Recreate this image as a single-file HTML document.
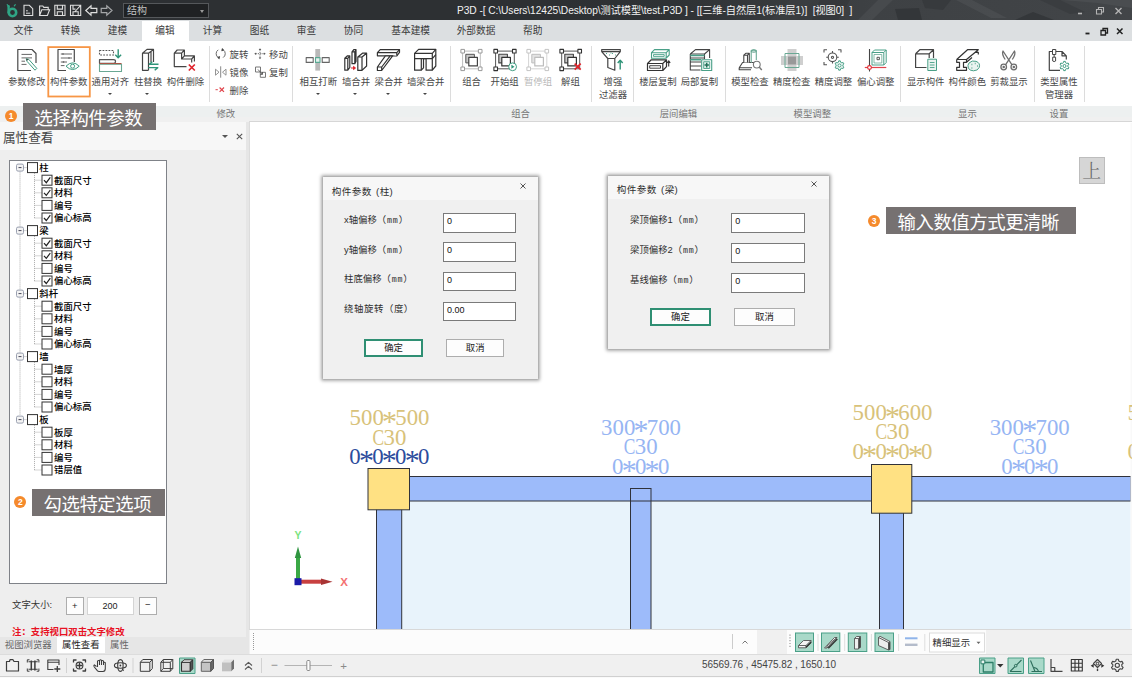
<!DOCTYPE html><html lang="zh-CN"><head><meta charset="utf-8"><title>P3D</title><style>
*{box-sizing:border-box;margin:0;padding:0}
html,body{width:1132px;height:678px;overflow:hidden;background:#f0f0f0}
body{font-family:"Liberation Sans","Noto Sans CJK SC",sans-serif;color:#444;position:relative}
#app{position:absolute;left:0;top:0;width:1132px;height:678px;overflow:hidden;background:#f0f0f0}
.abs{position:absolute}
.t{position:absolute;white-space:nowrap;line-height:1}
.c{transform:translate(-50%,-50%)}
.l{transform:translate(0,-50%)}
.rl{font-size:9.4px;color:#484848}
.gl{font-size:9.4px;color:#777}
.tab{font-size:9.7px;color:#3a3a3a}
.sep{position:absolute;width:1px;background:#dcdcdc;top:46px;height:56px}
.tree{font-size:9.4px;color:#000;font-weight:500}
.cb{position:absolute;width:10px;height:10px;border:1px solid #333;background:#fff}
.dlg{position:absolute;background:#f0f0f0;box-shadow:0 0 3.5px .5px rgba(0,0,0,.33);border:1px solid #b2b2b2;border-radius:1.5px}
.dlg .hd{position:absolute;left:0;top:0;right:0;height:23px;background:#f7f7f7}
.dl{font-size:9.4px;color:#2e2e2e}
.inp{position:absolute;background:#fff;border:1px solid #7a7a7a;font-size:9px;color:#111;padding:3px 0 0 3px;line-height:1}
.btn{position:absolute;background:#fdfdfd;border:1px solid #adadad;font-size:9.4px;color:#222;text-align:center}
.btn.ok{border:2px solid #2f8f73}
.call{position:absolute;background:#767171;color:#fff;font-size:18.4px;letter-spacing:-.45px;line-height:1;white-space:nowrap}
.dot{position:absolute;width:12.4px;height:12.4px;border-radius:50%;background:#f58a2c;color:#fff;font-size:8.5px;font-weight:bold;text-align:center;line-height:12.4px}
</style></head><body><div id="app"><div class="abs" style="left:0;top:0;width:1132px;height:20px;background:#2d3033"></div><svg class="abs" style="left:560px;top:0" width="572" height="20" viewBox="560 0 572 20">
<defs><linearGradient id="tg" x1="0" x2="1"><stop offset="0" stop-color="#2d3033"/><stop offset=".2" stop-color="#2f3235"/><stop offset=".55" stop-color="#3e4144"/><stop offset="1" stop-color="#424548"/></linearGradient></defs>
<rect x="560" width="572" height="20" fill="url(#tg)"/>
<g opacity=".75">
<polygon points="858,20 878,0 893,0 872,20" fill="#4a4d50"/>
<polygon points="895,9 919,8 922,20 898,20" fill="#303336"/>
<polygon points="922,0 951,0 943,10 925,8" fill="#35383b"/>
<polygon points="956,0 972,0 1007,18 991,18" fill="#4c4f52"/>
<polygon points="1015,20 1033,12 1054,20" fill="#303336"/>
<polygon points="1062,0 1132,0 1132,8 1097,3" fill="#4d5053"/>
<polygon points="790,0 815,0 796,20 770,20" fill="#3b3e41"/>
<polygon points="820,0 850,0 838,20 812,20" fill="#34373a"/>
<polygon points="1040,0 1060,0 1085,12 1070,14" fill="#383b3e"/>
</g>
</svg><svg class="abs" style="left:5px;top:2px" width="16" height="17" viewBox="0 0 16 17"><circle cx="7.5" cy="10.5" r="3.7" fill="none" stroke="#2fa585" stroke-width="2.6"/><path d="M3.6 10.5V4.2" stroke="#2fa585" stroke-width="2.4" stroke-linecap="round"/><path d="M2.2 2.6l1 1.2M10.3 2.6l-1 1.2" stroke="#2fa585" stroke-width="1.2" stroke-linecap="round"/></svg><svg class="abs" style="left:22px;top:3px" width="100" height="15" viewBox="22 3 100 15" fill="none" stroke="#dedede" stroke-width="1.100">
<path d="M24 5.300h5.300l3.400 3.400v6.800h-8.700z"/><path d="M26 10.800h1.800M26 13.200h4.300" stroke-width="1"/>
<path d="M39.600 15.500l2.200-5.800h7.800l-2.200 5.800zM39.600 15.500V6h3.200l1 1.400h4.400v2.300"/>
<path d="M54.800 5.300h10.200v10.200h-10.200zM57.300 5.300v3.800h5.200v-3.800M57.300 15.500v-3.800h5.200v3.800"/>
<path d="M70.500 5.300h10.200v10.200h-10.200zM73 5.300v3.800h2.500M73 15.500v-3.800h5.200v3.800M75 11.500l5.700-6.200"/>
<path d="M85.800 10.500L91 5.800V8.300H96.800V12.700H91V15.200Z" stroke-width="1.200"/>
<path d="M112 10.500L106.800 5.800V8.300H101.200V12.700H106.800V15.200Z" stroke="#a4a6a8" stroke-width="1.200"/>
</svg><div class="abs" style="left:123px;top:3px;width:86px;height:15px;background:#1f2123;border:1px solid #55585b"></div><div class="t l " style="left:127px;top:10.5px;font-size:10px;color:#c4c4c4">结构</div><div class="abs" style="left:200px;top:10px;border:2.5px solid transparent;border-top:3px solid #999;border-bottom:0"></div><div class="t l " style="left:457px;top:10.5px;font-size:10.2px;color:#f2f2f2;letter-spacing:-0.066px;">P3D -[ C:\Users\12425\Desktop\测试模型\test.P3D ] - [[三维-自然层1(标准层1)]&nbsp; [视图0]&nbsp; ]</div><svg class="abs" style="left:1070px;top:2px" width="62" height="17" viewBox="1070 2 62 17" fill="none" stroke="#b4b4b4" stroke-width="1.1">
<path d="M1078 13.500h4" stroke-width="1.6"/><path d="M1096.500 9.500h5v4.500h-5zM1098.500 9.500v-2h5v4.500h-2"/><path d="M1115.500 8l6 6M1121.500 8l-6 6" stroke-width="1.4"/></svg><div class="abs" style="left:0;top:20px;width:1132px;height:21px;background:#dcdfe1"></div><div class="abs" style="left:142px;top:21px;width:47px;height:20px;background:#fff"></div><div class="t c tab" style="left:23.5px;top:31px;">文件</div><div class="t c tab" style="left:70.5px;top:31px;">转换</div><div class="t c tab" style="left:117.5px;top:31px;">建模</div><div class="t c tab" style="left:164.9px;top:31px;">编辑</div><div class="t c tab" style="left:212.5px;top:31px;">计算</div><div class="t c tab" style="left:259.5px;top:31px;">图纸</div><div class="t c tab" style="left:306.5px;top:31px;">审查</div><div class="t c tab" style="left:353.5px;top:31px;">协同</div><div class="t c tab" style="left:410.7px;top:31px;">基本建模</div><div class="t c tab" style="left:476px;top:31px;">外部数据</div><div class="t c tab" style="left:532.7px;top:31px;">帮助</div><svg class="abs" style="left:1080px;top:23px" width="52" height="17" viewBox="1080 23 52 17" fill="none" stroke="#222" stroke-width="1.3">
<path d="M1085.500 33.500h4" stroke-width="1.8"/><path d="M1101 30.500h4.500v4.500h-4.500zM1103 30.500v-2h4.500v4.500h-2"/><path d="M1117 28.500l5.500 5.500M1122.500 28.500l-5.500 5.500" stroke-width="1.5"/></svg><div class="abs" style="left:0;top:41px;width:1132px;height:65px;background:#fff"></div><div class="abs" style="left:0;top:106px;width:1132px;height:16px;background:linear-gradient(#edf0f0 0,#edf0f0 11px,#f0f0f0 11px,#f0f0f0 16px)"></div><div class="sep" style="left:208.7px"></div><div class="sep" style="left:292px"></div><div class="sep" style="left:450px"></div><div class="sep" style="left:591px"></div><div class="sep" style="left:632.5px"></div><div class="sep" style="left:724.5px"></div><div class="sep" style="left:900px"></div><div class="sep" style="left:1034px"></div><div class="sep" style="left:1083.5px"></div><div class="t c rl" style="left:26.7px;top:81.8px;">参数修改</div><div class="t c rl" style="left:68.7px;top:81.8px;">构件参数</div><div class="t c rl" style="left:110.3px;top:81.8px;">通用对齐</div><div class="t c rl" style="left:148px;top:81.8px;">柱替换</div><div class="t c rl" style="left:185.5px;top:81.8px;">构件删除</div><div class="t c rl" style="left:318.3px;top:81.8px;">相互打断</div><div class="t c rl" style="left:356px;top:81.8px;">墙合并</div><div class="t c rl" style="left:388.7px;top:81.8px;">梁合并</div><div class="t c rl" style="left:425.7px;top:81.8px;">墙梁合并</div><div class="t c rl" style="left:471.6px;top:81.8px;">组合</div><div class="t c rl" style="left:504.7px;top:81.8px;">开始组</div><div class="t c rl" style="left:570.5px;top:81.8px;">解组</div><div class="t c rl" style="left:613px;top:81.8px;">增强</div><div class="t c rl" style="left:658px;top:81.8px;">楼层复制</div><div class="t c rl" style="left:699.5px;top:81.8px;">局部复制</div><div class="t c rl" style="left:750px;top:81.8px;">模型检查</div><div class="t c rl" style="left:791.7px;top:81.8px;">精度检查</div><div class="t c rl" style="left:833.5px;top:81.8px;">精度调整</div><div class="t c rl" style="left:875.7px;top:81.8px;">偏心调整</div><div class="t c rl" style="left:925.7px;top:81.8px;">显示构件</div><div class="t c rl" style="left:967.3px;top:81.8px;">构件颜色</div><div class="t c rl" style="left:1009px;top:81.8px;">剪裁显示</div><div class="t c rl" style="left:1059px;top:81.8px;">类型属性</div><div class="t c rl" style="left:538px;top:81.8px;color:#b8b8b8">暂停组</div><div class="t c rl" style="left:613px;top:95.4px;">过滤器</div><div class="t c rl" style="left:1059px;top:95.4px;">管理器</div><div class="abs" style="left:107.7px;top:92.5px;border:2px solid transparent;border-top:2.5px solid #444;border-bottom:0"></div><div class="abs" style="left:145.2px;top:92.5px;border:2px solid transparent;border-top:2.5px solid #444;border-bottom:0"></div><div class="abs" style="left:316px;top:92.5px;border:2px solid transparent;border-top:2.5px solid #444;border-bottom:0"></div><div class="abs" style="left:353.3px;top:92.5px;border:2px solid transparent;border-top:2.5px solid #444;border-bottom:0"></div><div class="abs" style="left:386.2px;top:92.5px;border:2px solid transparent;border-top:2.5px solid #444;border-bottom:0"></div><div class="abs" style="left:423.2px;top:92.5px;border:2px solid transparent;border-top:2.5px solid #444;border-bottom:0"></div><div class="t l rl" style="left:229.5px;top:55px;">旋转</div><div class="t l rl" style="left:269px;top:55px;">移动</div><div class="t l rl" style="left:229.5px;top:73px;">镜像</div><div class="t l rl" style="left:269px;top:73px;">复制</div><div class="t l rl" style="left:229.5px;top:91px;">删除</div><div class="t c gl" style="left:225.8px;top:114px;">修改</div><div class="t c gl" style="left:520.6px;top:114px;">组合</div><div class="t c gl" style="left:678.4px;top:114px;">层间编辑</div><div class="t c gl" style="left:812.3px;top:114px;">模型调整</div><div class="t c gl" style="left:967.5px;top:114px;">显示</div><div class="t c gl" style="left:1059px;top:114px;">设置</div><svg class="abs" style="left:45px;top:44px" width="50" height="56" viewBox="45 44 50 56"><rect x="48.300" y="47.100" width="41.500" height="49.400" fill="none" stroke="#f79646" stroke-width="1.800"/></svg><svg class="abs" style="left:0;top:41px" width="1132" height="64" viewBox="0 41 1132 64" fill="none" stroke="#4a4a4a" stroke-width="1.200" stroke-linejoin="round">
<!-- 1 参数修改 -->
<path d="M31 70.500H17.800V49.500H32L36 53.500V63"/>
<path d="M21.500 54.400H32M21.500 57.900H32M21.500 61.200H25M21.500 64.400H26.500" stroke-width="1" stroke="#666"/>
<path d="M26.200 58.700L28.800 59.400 36.800 68.400 35 70.200 27 61.300Z" fill="#fff" stroke="#3f9d82" stroke-width="1"/>
<path d="M26.200 58.700l.6 2.200 1.700-1.600z" fill="#444" stroke="none"/>
<!-- 2 构件参数 -->
<path d="M66 70.500H58V49.500H74.300V62"/>
<path d="M60.800 54H72M60.800 58H72M60.800 62H67M60.800 65.600H64.500" stroke="#666" stroke-width="1"/>
<path d="M63 53.200v1.600M69 57.200v1.600M63.500 61.200v1.600" stroke="#666" stroke-width="1.400"/>
<path d="M66 66.200Q72.600 59.500 79.200 66.200Q72.600 72.900 66 66.200Z" fill="#fff" stroke="#3f9d82" stroke-width="1"/>
<circle cx="72.600" cy="66.200" r="2" stroke="#3f9d82" stroke-width="1"/>
<!-- 3 通用对齐 -->
<path d="M99.500 50.500H113.500V55H99.500Z" stroke="#555" stroke-width="1.100" stroke-dasharray="1.800 1.200"/>
<path d="M118.200 49.200V57.500M115.300 54.700l2.900 3 2.900-3" stroke="#2f9478" stroke-width="1.400"/>
<path d="M99.500 59.700H113.500Q115.500 59.700 115.500 61.500T113.500 63.300H99.500Z" stroke="#555"/>
<path d="M99.500 63.600H121.500" stroke="#c0392b" stroke-width="1.200"/>
<path d="M99.500 64.300H121.500V71.500H99.500Z" stroke="#6aa894" stroke-width="1.100"/>
<!-- 4 柱替换 -->
<path d="M148.500 70.300H142.500V53.200L147 49.400H153.500V62M142.500 53.200H148.500V70.300M148.500 53.200L153.500 49.400M151 51.500V62" stroke="#444"/>
<path d="M158.500 64.300H149.200L152.300 61.800M148.200 67.600H157.800L154.700 70.200" stroke="#2f9478" stroke-width="1.400"/>
<!-- 5 构件删除 -->
<path d="M186.500 66.600H174.300V53.200L177.200 50H184.400V55.800H194.400V61.500M174.300 53.200H181.600V59H191.700V62.500M181.600 53.200L184.400 50M191.700 59L194.400 55.800M181.600 59L184.400 55.800" stroke="#444"/>
<path d="M188.800 64.500l6 6M194.800 64.500l-6 6" stroke="#e0242c" stroke-width="1.700"/>
<!-- small: 旋转 移动 镜像 复制 删除 -->
<g stroke="#6a6a6a" stroke-width="1">
<path d="M218.300 49.800A4.600 4.600 0 0 0 218.300 57.600M223.100 57.600A4.600 4.600 0 0 0 223.100 49.800"/>
<path d="M222.200 48.600l1.500 1.400-1.900 .9zM219.200 58.800l-1.500-1.400 1.900-.9z" fill="#444" stroke="#444" stroke-width=".8"/>
<path d="M260 49.500V58M255.500 53.700H264.500" stroke-dasharray="1.300 1"/>
<path d="M260 48.200l1.300 1.800h-2.600zM260 59.200l1.300-1.800h-2.600zM254.300 53.700l1.800-1.300v2.600zM265.700 53.700l-1.800-1.300v2.600z" fill="#555" stroke="none"/>
<path d="M220.700 66.300V77.700" stroke="#888"/>
<path d="M215.500 69.200V75.200L219 72.200ZM226 69.200V75.200L222.500 72.200Z" stroke="#888" stroke-width=".9"/>
<path d="M255.500 67H260.500V72H255.500ZM260.300 72.300H265.500V77.300H260.300Z" stroke="#777"/>
<path d="M258 69.500L262.300 74.200M262.500 72v2.400h-2.300" stroke="#555" stroke-width=".9"/>
<path d="M219.600 87.500l4.400 4.400M224 87.500l-4.400 4.400" stroke="#e0444c" stroke-width="1.200"/>
<path d="M215.500 89.700h2.300" stroke="#e0444c" stroke-width="1"/>
</g>
<!-- 相互打断 -->
<rect x="315.300" y="49" width="4.800" height="21.600" fill="#b9b9b9" stroke="none"/>
<rect x="306.200" y="57.600" width="7" height="4.800" stroke="#666" stroke-width="1.100" fill="#fff"/>
<rect x="322.200" y="57.600" width="7" height="4.800" stroke="#666" stroke-width="1.100" fill="#fff"/>
<rect x="315.500" y="57.600" width="4.500" height="4.800" stroke="#5aa892" stroke-width="1.100" fill="#e6f2ee"/>
<!-- 墙合并 -->
<g stroke="#333" stroke-width="1.200" fill="#fff">
<path d="M344.800 58.300L347.500 55.800H349.800V67.500L347.800 70.200H344.800ZM344.800 58.300H347.800V70.200M347.800 58.300L349.800 55.800"/>
<path d="M352 51.800L354 49.500H356V61.500L354.800 63.700H352ZM352 51.800H354.800V63.700M354.800 51.800L356 49.500"/>
<path d="M357.800 57L362.500 53.200H366.600V66L362 70.400H357.800ZM357.800 57H362V70.400M362 57L366.600 53.200"/>
<path d="M351 68H355M353.500 66.400l2 1.600-2 1.600z" stroke="#e0242c" fill="#e0242c" stroke-width="1"/>
</g>
<!-- 梁合并 -->
<g stroke="#333" stroke-width="1.200" fill="#fff">
<path d="M377.400 52.700L380.200 49.600H399.500V52.300L396.800 55.800H377.400Z"/>
<path d="M377.400 52.700H396.800V55.800M396.800 52.700L399.500 49.600"/>
<path d="M385.400 55.800L377.400 67V70.500H381.700L392.600 55.800ZM377.400 67H381.700V70.500M381.700 67L390.200 55.800"/>
</g>
<!-- 墙梁合并 -->
<g stroke="#333" stroke-width="1.200" fill="#fff">
<path d="M414.600 53.300L418.600 49.300H435.800V66L432.300 70.200H426.100V58.600H423.500V67.800L421.300 70.200H414.600Z"/>
<path d="M414.600 53.300H432.300V70.200M432.300 53.300L435.800 49.300M414.600 58.600H432.300M432.300 58.600L435.800 54.600M421.300 58.600V70.200" fill="none"/>
</g>
<!-- 组合 -->
<g id="grp1" stroke="#9a9a9a" stroke-width="1">
<path d="M462.600 51.100H480.300V68.800H462.600Z" stroke="#bdbdbd"/>
<rect x="465.800" y="54.300" width="8.600" height="8.600" fill="#c9c9c9" stroke="#555"/>
<rect x="468.800" y="57.300" width="8.600" height="8.600" fill="#fff" stroke="#444" stroke-width="1.200"/>
<rect x="460.900" y="49.400" width="3.600" height="3.600" fill="#fff"/><rect x="478.400" y="49.400" width="3.600" height="3.600" fill="#fff"/><rect x="460.900" y="67" width="3.600" height="3.600" fill="#fff"/><rect x="478.400" y="67" width="3.600" height="3.600" fill="#fff"/>
</g>
<!-- 开始组 -->
<g stroke="#333" stroke-width="1.100">
<path d="M495.600 51.100H514.300V68.800H495.600Z" stroke="#555" stroke-width="1"/>
<rect x="498.800" y="54.300" width="8.600" height="8.600" fill="#c9c9c9" stroke="#444"/>
<rect x="501.800" y="57.300" width="8.600" height="8.600" fill="#fff" stroke="#333" stroke-width="1.200"/>
<rect x="493.900" y="49.400" width="3.600" height="3.600" fill="#fff"/><rect x="512.500" y="49.400" width="3.600" height="3.600" fill="#fff"/><rect x="493.900" y="67" width="3.600" height="3.600" fill="#fff"/>
<circle cx="512.600" cy="66.800" r="3.900" fill="#fff" stroke="#3f9d82" stroke-width="1"/>
<path d="M511.400 64.800v4l3.100-2z" fill="#2f9478" stroke="none"/>
</g>
<!-- 暂停组 -->
<g stroke="#c4c4c4" stroke-width="1">
<path d="M528.600 51.100H546.800V68.800H528.600Z" stroke="#d4d4d4"/>
<rect x="531.800" y="54.300" width="8.600" height="8.600" fill="#e3e3e3" stroke="#bdbdbd"/>
<rect x="534.800" y="57.300" width="8.600" height="8.600" fill="#fff" stroke="#bdbdbd" stroke-width="1.200"/>
<rect x="526.900" y="49.400" width="3.600" height="3.600" fill="#fff"/><rect x="545" y="49.400" width="3.600" height="3.600" fill="#fff"/><rect x="526.900" y="67" width="3.600" height="3.600" fill="#fff"/><rect x="545" y="67" width="3.600" height="3.600" fill="#fff"/>
</g>
<!-- 解组 -->
<g stroke="#333" stroke-width="1.100">
<path d="M561.700 51.100H579.700V68.800H561.700Z" stroke="#555" stroke-width="1"/>
<rect x="564.800" y="54.300" width="8.600" height="8.600" fill="#c9c9c9" stroke="#444"/>
<rect x="567.800" y="57.300" width="8.600" height="8.600" fill="#fff" stroke="#333" stroke-width="1.200"/>
<rect x="559.900" y="49.400" width="3.600" height="3.600" fill="#fff"/><rect x="577.900" y="49.400" width="3.600" height="3.600" fill="#fff"/><rect x="559.900" y="67" width="3.600" height="3.600" fill="#fff"/>
<path d="M574.700 63.700l6 6M580.700 63.700l-6 6" stroke="#e0242c" stroke-width="1.700"/>
</g>
<!-- 增强过滤器 -->
<path d="M601.700 49.600H620.300V51.600L614.800 58.500V70.200L607.800 67.500V58.500L601.700 51.600ZM601.700 51.600H620.300M607.800 58.500H614.800" stroke="#444"/>
<path d="M606 53.500h.9M609 55h.9M612 53.500h.9M615 55h.9M610.500 53h.9" stroke="#3f9d82" stroke-width="1"/>
<path d="M620.200 69.500V60.500M617.700 63l2.500-2.800 2.500 2.800" stroke="#2f9478" stroke-width="1.400"/>
<!-- 楼层复制 -->
<g stroke="#4aa088" stroke-width="1.100">
<path d="M651.500 52.700L654.500 49.600H669.200V55L666.200 58.200H651.500ZM651.500 52.700H666.200V58.200M666.200 52.700L669.200 49.600"/>
<path d="M653.500 54.600H664.200V56.400H653.500Z" stroke-width=".9"/>
</g>
<g stroke="#333" stroke-width="1.200">
<path d="M647.500 63.500L651.300 59.800H666.500V66.700L662.800 70.500H647.500ZM647.500 63.500H662.800V70.500M662.800 63.500L666.500 59.800"/>
<path d="M649.700 65.700H660.500V68.200H649.700Z" stroke-width=".9"/>
<path d="M668.700 66.500V61M667.200 62.800l1.500-2 1.500 2" stroke-width="1.100"/>
</g>
<!-- 局部复制 -->
<g stroke="#444" stroke-width="1.100">
<path d="M690.300 54L695.500 49.600H709.600V58M690.300 54H704.500L709.600 49.600M704.500 54V59"/>
<path d="M690.300 54V70H700.500M690.300 58H704.500M690.300 62H701M690.300 66H701"/>
<path d="M690.300 55.500H704.500M690.300 59.700H701" stroke="#4aa088" stroke-width="1.600"/>
<rect x="701.700" y="59.700" width="10" height="10.800" fill="#fff" stroke="#4aa088"/>
<rect x="703.700" y="61.700" width="6" height="6.800" fill="#e1f0eb" stroke="#4aa088" stroke-width=".9"/>
<path d="M706.700 62.800v4.600M704.500 65.100h4.400" stroke="#23705a" stroke-width="1.500"/>
</g>
<!-- 模型检查 -->
<g stroke="#444" stroke-width="1.100">
<path d="M739.200 67.700L742.600 62.500H758.500M739.200 67.700H752M739.200 67.700V69.800H751"/>
<path d="M743.800 62.500V55.200L745.800 53.300H749.300V62.500M743.800 55.200H747.500V62.500M747.500 55.200L749.300 53.300" fill="#fff"/>
<path d="M751.200 62.500V51Q753.700 49 756.300 51V60" stroke="#6aa894" fill="#fff"/>
<ellipse cx="753.750" cy="51" rx="2.550" ry="1.100" stroke="#6aa894"/>
<circle cx="756.800" cy="64.600" r="3.400" fill="#fff" stroke="#777"/>
<path d="M759.200 67l2.600 3" stroke="#777" stroke-width="1.400"/>
</g>
<!-- 精度检查 -->
<rect x="787.500" y="49" width="9" height="22" fill="#cfcfcf" stroke="none"/>
<rect x="781" y="56" width="22" height="9" fill="#cfcfcf" stroke="none"/>
<rect x="788" y="56.500" width="8" height="8" fill="#999" stroke="none"/>
<rect x="785" y="53.500" width="14" height="14" stroke="#6aa894" stroke-width="1"/>
<!-- 精度调整 -->
<g stroke="#555" stroke-width="1.100">
<circle cx="832.500" cy="57.300" r="4.300"/><circle cx="832.500" cy="57.300" r="1.100"/>
<path d="M832.500 51v2M832.500 61.600v2M826.200 57.300h2M836.800 57.300h2"/>
<path d="M824 52.500V49.700H827M838 49.700H841V52.500M824 62V64.800H827"/>
<g stroke="#3f9d82" stroke-width="1">
<path d="M838.55 62.13L838.68 60.87L840.32 60.87L840.45 62.13L841.94 62.99L843.10 62.47L843.92 63.90L842.89 64.64L842.89 66.36L843.92 67.10L843.10 68.53L841.94 68.01L840.45 68.87L840.32 70.13L838.68 70.13L838.55 68.87L837.06 68.01L835.90 68.53L835.08 67.10L836.11 66.36L836.11 64.64L835.08 63.90L835.90 62.47L837.06 62.99Z" fill="#fff"/><circle cx="839.500" cy="65.500" r="1.600"/>
</g>
</g>
<!-- 偏心调整 -->
<g stroke-width="1.100">
<path d="M869.500 49V71.500" stroke="#444"/>
<path d="M872 52.500L874.500 50H886.200V62.500L883.800 65H872ZM872 52.500H883.800V65M883.800 52.500L886.200 50" stroke="#4aa088" stroke-width="1"/>
<path d="M874 54.500H881.800V63H874Z" stroke="#6aa894" stroke-width=".8"/>
<rect x="877" y="57.300" width="2.400" height="2.400" stroke="#444" stroke-width=".9"/>
<path d="M864.800 67.500H886.300" stroke="#e0444c" stroke-width="1.200"/>
<circle cx="869.500" cy="67.500" r="1.900" fill="#fff" stroke="#e0242c" stroke-width="1.100"/>
</g>
<!-- 显示构件 -->
<g stroke="#444" stroke-width="1.200">
<path d="M915.600 53.800L919.800 49.700H933.500V58M915.600 53.800H929.200V58M929.200 53.800L933.500 49.700M915.600 53.800V67.500H926.500"/>
<path d="M931.500 52l2-2.300 2 2.300" stroke-width="1" stroke="#555" fill="none" opacity="0"/>
<rect x="927.800" y="59.200" width="8.700" height="11.300" fill="#eaf4f0" stroke="#4aa088" stroke-width="1"/>
<path d="M929.800 62.500H934.500M929.800 65H934.500M929.800 67.500H934.500" stroke="#4aa088" stroke-width=".9"/>
</g>
<!-- 构件颜色 -->
<g stroke="#333" stroke-width="1.200">
<path d="M956.700 59.500L967.500 49.700H978.300L976 52.300H978.300V54.500M956.700 59.500H966.500L978.300 49.700M956.700 59.500V62.300H959.500V67.300H956.700V70.300H966.500V67.300H963.500V62.300H966.500V59.500M966.500 62.300L972 57.500"/>
<path d="M969 63Q972 60 976 61.300Q980.500 63 979.300 67.300Q978 70.800 973.500 70.800Q969.500 70.800 968.300 68Q967.300 65 969 63Z" fill="#eaf4f0" stroke="#4aa088" stroke-width="1"/>
<path d="M971.500 64.500h.8M974.800 63.500h.8M977 66h.8M971.500 68h.8" stroke="#4aa088" stroke-width="1.300"/>
</g>
<!-- 剪裁显示 -->
<g stroke="#6e6e6e" stroke-width="1.300">
<circle cx="1003.700" cy="67" r="2.800"/><circle cx="1013.800" cy="67" r="2.800"/>
<path d="M1005.500 64.800L1014.500 51Q1016 54 1012.300 59.500M1012 64.800L1003 51Q1001.500 54 1005.200 59.500"/>
<circle cx="1003.700" cy="67" r=".6"/><circle cx="1013.800" cy="67" r=".6"/>
</g>
<!-- 类型属性管理器 -->
<g stroke="#444" stroke-width="1.200">
<path d="M1060 70.300H1049.300V51.500H1052M1056 51.500H1062L1066.300 55.800V59.500M1062 51.500V55.800H1066.300"/>
<path d="M1052.500 49.500H1055.800V54.500H1052.500ZM1054.150 54.500V57M1052.700 57.200H1055.600V61Q1054.150 62.200 1052.700 61Z" stroke-width="1"/>
<g stroke="#3f9d82" stroke-width="1">
<circle cx="1064.500" cy="66" r="1.500"/>
<path d="M1063.55 62.63L1063.68 61.37L1065.32 61.37L1065.45 62.63L1066.94 63.49L1068.10 62.97L1068.92 64.40L1067.89 65.14L1067.89 66.86L1068.92 67.60L1068.10 69.03L1066.94 68.51L1065.45 69.37L1065.32 70.63L1063.68 70.63L1063.55 69.37L1062.06 68.51L1060.90 69.03L1060.08 67.60L1061.11 66.86L1061.11 65.14L1060.08 64.40L1060.90 62.97L1062.06 63.49Z" fill="#fff"/>
<circle cx="1064.500" cy="66" r="1.500"/>
</g>
</g>
</svg>
<div class="abs" style="left:0;top:122px;width:247px;height:28px;background:#f7f7f7"></div><div class="abs" style="left:0;top:150px;width:247px;height:504px;background:#eeeeee"></div><div class="abs" style="left:246px;top:122px;width:3px;height:532px;background:#e6e6e6"></div><div class="t l " style="left:3px;top:137.8px;font-size:12.6px;color:#444">属性查看</div><div class="abs" style="left:221.500px;top:135px;border:3px solid transparent;border-top:3.5px solid #555;border-bottom:0"></div><svg class="abs" style="left:236px;top:133px" width="7" height="7" viewBox="0 0 7 7"><path d="M.8.800l5.400 5.400M6.200.800L.8 6.200" stroke="#555" stroke-width="1.100"/></svg><div class="abs" style="left:8.500px;top:160px;width:158px;height:424px;background:#fff;border:1px solid #7f8288"></div><div class="t l tree" style="left:39.3px;top:167.9px;">柱</div><div class="t l tree" style="left:54px;top:180.5px;">截面尺寸</div><div class="t l tree" style="left:54px;top:193.1px;">材料</div><div class="t l tree" style="left:54px;top:205.7px;">编号</div><div class="t l tree" style="left:54px;top:218.3px;">偏心标高</div><div class="t l tree" style="left:39.3px;top:230.9px;">梁</div><div class="t l tree" style="left:54px;top:243.5px;">截面尺寸</div><div class="t l tree" style="left:54px;top:256.1px;">材料</div><div class="t l tree" style="left:54px;top:268.7px;">编号</div><div class="t l tree" style="left:54px;top:281.3px;">偏心标高</div><div class="t l tree" style="left:39.3px;top:293.90000000000003px;">斜杆</div><div class="t l tree" style="left:54px;top:306.5px;">截面尺寸</div><div class="t l tree" style="left:54px;top:319.09999999999997px;">材料</div><div class="t l tree" style="left:54px;top:331.7px;">编号</div><div class="t l tree" style="left:54px;top:344.3px;">偏心标高</div><div class="t l tree" style="left:39.3px;top:356.90000000000003px;">墙</div><div class="t l tree" style="left:54px;top:369.5px;">墙厚</div><div class="t l tree" style="left:54px;top:382.09999999999997px;">材料</div><div class="t l tree" style="left:54px;top:394.7px;">编号</div><div class="t l tree" style="left:54px;top:407.3px;">偏心标高</div><div class="t l tree" style="left:39.3px;top:419.90000000000003px;">板</div><div class="t l tree" style="left:54px;top:432.49999999999994px;">板厚</div><div class="t l tree" style="left:54px;top:445.09999999999997px;">材料</div><div class="t l tree" style="left:54px;top:457.7px;">编号</div><div class="t l tree" style="left:54px;top:470.3px;">错层值</div><svg class="abs" style="left:0;top:150px" width="170" height="340" viewBox="0 150 170 340" fill="none"><path d="M20 171.6V415.6" stroke="#aaa" stroke-width="1" stroke-dasharray="1 1"/><path d="M23.500 167.6H27.500" stroke="#aaa" stroke-dasharray="1 1"/><rect x="16.500" y="164.1" width="7" height="7" rx="1.500" fill="#f4f4f4" stroke="#9aa0b0" stroke-width="1"/><path d="M18.500 167.6h3" stroke="#445" stroke-width="1"/><rect x="27.5" y="162.6" width="10" height="10" fill="#fff" stroke="#333" stroke-width="1"/><path d="M34.500 173.1V218.0" stroke="#aaa" stroke-dasharray="1 1"/><path d="M34.500 180.2H42" stroke="#aaa" stroke-dasharray="1 1"/><rect x="42.0" y="175.2" width="10" height="10" fill="#fff" stroke="#333" stroke-width="1"/><path d="M44.0 180.2l2.300 2.500 4-5.300" stroke="#222" stroke-width="1.200"/><path d="M34.500 192.8H42" stroke="#aaa" stroke-dasharray="1 1"/><rect x="42.0" y="187.8" width="10" height="10" fill="#fff" stroke="#333" stroke-width="1"/><path d="M44.0 192.8l2.300 2.500 4-5.300" stroke="#222" stroke-width="1.200"/><path d="M34.500 205.4H42" stroke="#aaa" stroke-dasharray="1 1"/><rect x="42.0" y="200.4" width="10" height="10" fill="#fff" stroke="#333" stroke-width="1"/><path d="M34.500 218.0H42" stroke="#aaa" stroke-dasharray="1 1"/><rect x="42.0" y="213.0" width="10" height="10" fill="#fff" stroke="#333" stroke-width="1"/><path d="M44.0 218.0l2.300 2.500 4-5.300" stroke="#222" stroke-width="1.200"/><path d="M23.500 230.6H27.500" stroke="#aaa" stroke-dasharray="1 1"/><rect x="16.500" y="227.1" width="7" height="7" rx="1.500" fill="#f4f4f4" stroke="#9aa0b0" stroke-width="1"/><path d="M18.500 230.6h3" stroke="#445" stroke-width="1"/><rect x="27.5" y="225.6" width="10" height="10" fill="#fff" stroke="#333" stroke-width="1"/><path d="M34.500 236.1V281.0" stroke="#aaa" stroke-dasharray="1 1"/><path d="M34.500 243.2H42" stroke="#aaa" stroke-dasharray="1 1"/><rect x="42.0" y="238.2" width="10" height="10" fill="#fff" stroke="#333" stroke-width="1"/><path d="M44.0 243.2l2.300 2.500 4-5.300" stroke="#222" stroke-width="1.200"/><path d="M34.500 255.8H42" stroke="#aaa" stroke-dasharray="1 1"/><rect x="42.0" y="250.8" width="10" height="10" fill="#fff" stroke="#333" stroke-width="1"/><path d="M44.0 255.8l2.300 2.500 4-5.300" stroke="#222" stroke-width="1.200"/><path d="M34.500 268.4H42" stroke="#aaa" stroke-dasharray="1 1"/><rect x="42.0" y="263.4" width="10" height="10" fill="#fff" stroke="#333" stroke-width="1"/><path d="M34.500 281.0H42" stroke="#aaa" stroke-dasharray="1 1"/><rect x="42.0" y="276.0" width="10" height="10" fill="#fff" stroke="#333" stroke-width="1"/><path d="M44.0 281.0l2.300 2.500 4-5.300" stroke="#222" stroke-width="1.200"/><path d="M23.500 293.6H27.500" stroke="#aaa" stroke-dasharray="1 1"/><rect x="16.500" y="290.1" width="7" height="7" rx="1.500" fill="#f4f4f4" stroke="#9aa0b0" stroke-width="1"/><path d="M18.500 293.6h3" stroke="#445" stroke-width="1"/><rect x="27.5" y="288.6" width="10" height="10" fill="#fff" stroke="#333" stroke-width="1"/><path d="M34.500 299.1V344.0" stroke="#aaa" stroke-dasharray="1 1"/><path d="M34.500 306.2H42" stroke="#aaa" stroke-dasharray="1 1"/><rect x="42.0" y="301.2" width="10" height="10" fill="#fff" stroke="#333" stroke-width="1"/><path d="M34.500 318.8H42" stroke="#aaa" stroke-dasharray="1 1"/><rect x="42.0" y="313.8" width="10" height="10" fill="#fff" stroke="#333" stroke-width="1"/><path d="M34.500 331.4H42" stroke="#aaa" stroke-dasharray="1 1"/><rect x="42.0" y="326.4" width="10" height="10" fill="#fff" stroke="#333" stroke-width="1"/><path d="M34.500 344.0H42" stroke="#aaa" stroke-dasharray="1 1"/><rect x="42.0" y="339.0" width="10" height="10" fill="#fff" stroke="#333" stroke-width="1"/><path d="M23.500 356.6H27.500" stroke="#aaa" stroke-dasharray="1 1"/><rect x="16.500" y="353.1" width="7" height="7" rx="1.500" fill="#f4f4f4" stroke="#9aa0b0" stroke-width="1"/><path d="M18.500 356.6h3" stroke="#445" stroke-width="1"/><rect x="27.5" y="351.6" width="10" height="10" fill="#fff" stroke="#333" stroke-width="1"/><path d="M34.500 362.1V407.0" stroke="#aaa" stroke-dasharray="1 1"/><path d="M34.500 369.2H42" stroke="#aaa" stroke-dasharray="1 1"/><rect x="42.0" y="364.2" width="10" height="10" fill="#fff" stroke="#333" stroke-width="1"/><path d="M34.500 381.8H42" stroke="#aaa" stroke-dasharray="1 1"/><rect x="42.0" y="376.8" width="10" height="10" fill="#fff" stroke="#333" stroke-width="1"/><path d="M34.500 394.4H42" stroke="#aaa" stroke-dasharray="1 1"/><rect x="42.0" y="389.4" width="10" height="10" fill="#fff" stroke="#333" stroke-width="1"/><path d="M34.500 407.0H42" stroke="#aaa" stroke-dasharray="1 1"/><rect x="42.0" y="402.0" width="10" height="10" fill="#fff" stroke="#333" stroke-width="1"/><path d="M23.500 419.6H27.500" stroke="#aaa" stroke-dasharray="1 1"/><rect x="16.500" y="416.1" width="7" height="7" rx="1.500" fill="#f4f4f4" stroke="#9aa0b0" stroke-width="1"/><path d="M18.500 419.6h3" stroke="#445" stroke-width="1"/><rect x="27.5" y="414.6" width="10" height="10" fill="#fff" stroke="#333" stroke-width="1"/><path d="M34.500 425.1V470.0" stroke="#aaa" stroke-dasharray="1 1"/><path d="M34.500 432.2H42" stroke="#aaa" stroke-dasharray="1 1"/><rect x="42.0" y="427.2" width="10" height="10" fill="#fff" stroke="#333" stroke-width="1"/><path d="M34.500 444.8H42" stroke="#aaa" stroke-dasharray="1 1"/><rect x="42.0" y="439.8" width="10" height="10" fill="#fff" stroke="#333" stroke-width="1"/><path d="M34.500 457.4H42" stroke="#aaa" stroke-dasharray="1 1"/><rect x="42.0" y="452.4" width="10" height="10" fill="#fff" stroke="#333" stroke-width="1"/><path d="M34.500 470.0H42" stroke="#aaa" stroke-dasharray="1 1"/><rect x="42.0" y="465.0" width="10" height="10" fill="#fff" stroke="#333" stroke-width="1"/></svg><div class="t l " style="left:12px;top:605px;font-size:9.4px;color:#333">文字大小:</div><div class="btn" style="left:65.500px;top:596.500px;width:18.500px;height:18px;line-height:15px">+</div><div class="btn" style="left:86.500px;top:596.500px;width:47px;height:18px;line-height:16px;border-color:#d4d4d4;font-size:9px;background:#fff">200</div><div class="btn" style="left:138.500px;top:596.500px;width:18.500px;height:18px;line-height:14px">−</div><div class="t l " style="left:12px;top:631.5px;font-size:9.4px;color:#e81123;font-weight:bold">注：支持视口双击文字修改</div><div class="abs" style="left:0;top:637px;width:247px;height:17px;background:#e6e6e6"></div><div class="abs" style="left:57px;top:637px;width:47.500px;height:16px;background:#fff"></div><div class="t c " style="left:28.3px;top:645.3px;font-size:9.4px;color:#666">视图浏览器</div><div class="t c " style="left:80.8px;top:645.3px;font-size:9.4px;color:#222">属性查看</div><div class="t c " style="left:119.5px;top:645.3px;font-size:9.4px;color:#666">属性</div><div class="abs" style="left:249px;top:121px;width:883px;height:508px;background:#fff;border-left:1px solid #dcdcdc;border-top:1px solid #d6d6d6"></div><svg class="abs" style="left:250px;top:123px" width="882" height="506" viewBox="250 123 882 506">
<g stroke="#30323a" stroke-width="1">
<rect x="401.700" y="501" width="729" height="130" fill="#e8f3fb" stroke="none"/>
<rect x="376.500" y="505" width="25.200" height="130" fill="#9dbbfa"/>
<rect x="879.500" y="505" width="24" height="130" fill="#9dbbfa"/>
<rect x="409" y="476.500" width="722" height="24.500" fill="#9dbbfa"/>
<rect x="630.500" y="488.500" width="20.500" height="150" fill="#9dbbfa"/>
<path d="M630.500 501H651" fill="none"/>
<rect x="368" y="468.500" width="41.500" height="41.300" fill="#ffe183"/>
<rect x="871.500" y="464.500" width="40.300" height="48.700" fill="#ffe183"/>
</g>
<rect x="1130.500" y="123" width="1.500" height="506" fill="#f9f9f9"/>
<g font-family="'Liberation Serif','Noto Serif CJK SC',serif" font-size="22.800" stroke="none">
<text y="425" fill="#d8c27a"><tspan x="349.5" dy="0.0">5</tspan><tspan x="360.9" dy="0.0">0</tspan><tspan x="372.4" dy="0.0">0</tspan><tspan x="382.0" dy="5.6" font-size="30">*</tspan><tspan x="395.2" dy="-5.6">5</tspan><tspan x="406.7" dy="0.0">0</tspan><tspan x="418.1" dy="0.0">0</tspan></text>
<text y="444.5" fill="#d8c27a"><tspan x="383.6" dy="0.0">3</tspan><tspan x="395.0" dy="0.0">0</tspan></text><text transform="translate(372.5,444.5) scale(.76,1)" fill="#d8c27a">C</text>
<text y="464" fill="#2c4c9c"><tspan x="349.3" dy="0.0">0</tspan><tspan x="358.9" dy="5.6" font-size="30">*</tspan><tspan x="372.2" dy="-5.6">0</tspan><tspan x="381.8" dy="5.6" font-size="30">*</tspan><tspan x="395.0" dy="-5.6">0</tspan><tspan x="404.7" dy="5.6" font-size="30">*</tspan><tspan x="417.9" dy="-5.6">0</tspan></text>
<text y="420" fill="#d8c27a"><tspan x="852.5" dy="0.0">5</tspan><tspan x="863.9" dy="0.0">0</tspan><tspan x="875.4" dy="0.0">0</tspan><tspan x="885.0" dy="5.6" font-size="30">*</tspan><tspan x="898.2" dy="-5.6">6</tspan><tspan x="909.7" dy="0.0">0</tspan><tspan x="921.1" dy="0.0">0</tspan></text>
<text y="439.3" fill="#d8c27a"><tspan x="886.6" dy="0.0">3</tspan><tspan x="898.0" dy="0.0">0</tspan></text><text transform="translate(875.5,439.3) scale(.76,1)" fill="#d8c27a">C</text>
<text y="459" fill="#d8c27a"><tspan x="852.5" dy="0.0">0</tspan><tspan x="862.1" dy="5.6" font-size="30">*</tspan><tspan x="875.4" dy="-5.6">0</tspan><tspan x="885.0" dy="5.6" font-size="30">*</tspan><tspan x="898.2" dy="-5.6">0</tspan><tspan x="907.9" dy="5.6" font-size="30">*</tspan><tspan x="921.1" dy="-5.6">0</tspan></text>
<text y="420" fill="#d8c27a"><tspan x="1127.5" dy="0.0">5</tspan><tspan x="1138.9" dy="0.0">0</tspan><tspan x="1150.4" dy="0.0">0</tspan><tspan x="1160.0" dy="5.6" font-size="30">*</tspan><tspan x="1173.2" dy="-5.6">5</tspan><tspan x="1184.7" dy="0.0">0</tspan><tspan x="1196.1" dy="0.0">0</tspan></text>
<text y="439.3" fill="#d8c27a"><tspan x="1161.8" dy="0.0">3</tspan><tspan x="1173.2" dy="0.0">0</tspan></text><text transform="translate(1150.7,439.3) scale(.76,1)" fill="#d8c27a">C</text>
<text y="459" fill="#d8c27a"><tspan x="1127.5" dy="0.0">0</tspan><tspan x="1137.1" dy="5.6" font-size="30">*</tspan><tspan x="1150.4" dy="-5.6">0</tspan><tspan x="1160.0" dy="5.6" font-size="30">*</tspan><tspan x="1173.2" dy="-5.6">0</tspan><tspan x="1182.9" dy="5.6" font-size="30">*</tspan><tspan x="1196.1" dy="-5.6">0</tspan></text>
<text y="434.7" fill="#96b5f3"><tspan x="601.0" dy="0.0">3</tspan><tspan x="612.4" dy="0.0">0</tspan><tspan x="623.9" dy="0.0">0</tspan><tspan x="633.5" dy="5.6" font-size="30">*</tspan><tspan x="646.7" dy="-5.6">7</tspan><tspan x="658.2" dy="0.0">0</tspan><tspan x="669.6" dy="0.0">0</tspan></text>
<text y="454.2" fill="#96b5f3"><tspan x="634.8" dy="0.0">3</tspan><tspan x="646.2" dy="0.0">0</tspan></text><text transform="translate(623.7,454.2) scale(.76,1)" fill="#96b5f3">C</text>
<text y="474.2" fill="#96b5f3"><tspan x="612.1" dy="0.0">0</tspan><tspan x="621.8" dy="5.6" font-size="30">*</tspan><tspan x="635.0" dy="-5.6">0</tspan><tspan x="644.6" dy="5.6" font-size="30">*</tspan><tspan x="657.9" dy="-5.6">0</tspan></text>
<text y="434.7" fill="#96b5f3"><tspan x="989.7" dy="0.0">3</tspan><tspan x="1001.1" dy="0.0">0</tspan><tspan x="1012.6" dy="0.0">0</tspan><tspan x="1022.2" dy="5.6" font-size="30">*</tspan><tspan x="1035.4" dy="-5.6">7</tspan><tspan x="1046.9" dy="0.0">0</tspan><tspan x="1058.3" dy="0.0">0</tspan></text>
<text y="454.2" fill="#96b5f3"><tspan x="1023.8" dy="0.0">3</tspan><tspan x="1035.2" dy="0.0">0</tspan></text><text transform="translate(1012.7,454.2) scale(.76,1)" fill="#96b5f3">C</text>
<text y="473.7" fill="#96b5f3"><tspan x="1001.2" dy="0.0">0</tspan><tspan x="1010.9" dy="5.6" font-size="30">*</tspan><tspan x="1024.1" dy="-5.6">0</tspan><tspan x="1033.7" dy="5.6" font-size="30">*</tspan><tspan x="1047.0" dy="-5.6">0</tspan></text>
</g>
<!-- axes -->
<g stroke="none">
<rect x="296" y="556" width="4" height="25" fill="#3aa845"/>
<polygon points="298,546.500 294.800,558 301.200,558" fill="#2f9540"/>
<rect x="298" y="579.700" width="25" height="4" fill="#c84040"/>
<polygon points="332.500,581.700 321,578.400 321,585" fill="#a83434"/>
<rect x="294.500" y="578.200" width="7" height="7" fill="#1b1ba8"/>
<text x="297.900" y="539.400" text-anchor="middle" font-family="'Liberation Sans',sans-serif" font-size="10.500" font-weight="bold" fill="#7be380">Y</text>
<text x="344" y="585.600" text-anchor="middle" font-family="'Liberation Sans',sans-serif" font-size="11.500" font-weight="bold" fill="#f47272">X</text>
</g>
</svg>
<div class="abs" style="left:249px;top:629px;width:883px;height:25px;background:#f0f0f0;border-top:1px solid #d8d8d8"></div><div class="abs" style="left:250px;top:630px;width:507px;height:24px;background:#fcfcfc"></div><div class="abs" style="left:787px;top:630px;width:199px;height:24px;background:#fcfcfc"></div><div class="abs" style="left:253px;top:633px;width:1px;height:17px;border-left:1px dotted #999"></div><div class="abs" style="left:732px;top:634px;width:1px;height:15px;background:#ccc"></div><svg class="abs" style="left:742px;top:640px" width="6" height="4" viewBox="0 0 6 4"><path d="M.5 3.500L3 1l2.500 2.500" fill="none" stroke="#777" stroke-width="1"/></svg><svg class="abs" style="left:786px;top:629px" width="204" height="26" viewBox="786 629 204 26" fill="none">
<path d="M790 634.500V648.500" stroke="#9a9a9a" stroke-width="1.200" stroke-dasharray="1.200 1.600"/>
<g fill="#a9d9c9" stroke="#4aa088" stroke-width="1">
<rect x="795.500" y="633" width="18" height="18.500"/><rect x="821.500" y="633" width="18.300" height="18.500"/><rect x="848.300" y="633" width="18.500" height="18.500"/><rect x="875" y="633" width="18.500" height="18.500"/>
</g>
<path d="M818 634V651M844.700 634V651M871.400 634V651M898.600 634V651M924.800 634V651" stroke="#dedede" stroke-width="1"/>
<!-- b1 slab -->
<path d="M798.500 645.500L803.500 640.500H811L806 645.500ZM798.500 645.500V647.800H806V645.500M806 647.800L811 642.800V640.500" fill="#f4f4f4" stroke="#555" stroke-width=".9"/>
<path d="M806 647.300L811 642.300" stroke="#333" stroke-width="1.500"/>
<!-- b2 beam -->
<path d="M824.500 648L834.500 637.500H837L827 648ZM827 648V646L837 637.500" fill="#f4f4f4" stroke="#555" stroke-width=".9"/>
<path d="M828.300 648.300L837.300 639" stroke="#333" stroke-width="1.400"/>
<!-- b3 column -->
<path d="M854.500 638.500L856.500 636.500H860.500V647L858.500 649H854.500ZM854.500 638.500H858.500V649M858.500 638.500L860.500 636.500" fill="#f0f0f0" stroke="#555" stroke-width=".9"/>
<path d="M859.700 637.500V648" stroke="#444" stroke-width="1.500"/>
<!-- b4 wall -->
<path d="M878.500 637.500L880 636.300L890 641.500V649.500L888.500 650L878.500 645.500ZM878.500 637.500L888.500 642.500V650M888.500 642.500L890 641.500" fill="#ececec" stroke="#555" stroke-width=".9"/>
<path d="M889.300 642.300V649.700" stroke="#444" stroke-width="1.500"/>
<!-- lines -->
<path d="M905 638.300H917.500" stroke="#8fb4ea" stroke-width="2"/>
<path d="M905 644.800H917.500" stroke="#b4bccb" stroke-width="2.400"/>
<rect x="929.500" y="633" width="55" height="19" fill="#fff" stroke="#dcdcdc"/>
<path d="M976.500 641.800h4l-2 2.200z" fill="#666"/>
</svg>
<div class="t l" style="left:932.500px;top:642.800px;font-size:9.400px;color:#333">精细显示</div>
<div class="abs" style="left:0;top:654px;width:1132px;height:24px;background:#f0f0f0;border-top:1px solid #dcdcdc"></div><div class="abs" style="left:0;top:676px;width:1132px;height:2px;background:#fafafa;border-top:1px solid #d0d0d0"></div><div class="t l " style="left:702px;top:665.3px;font-size:10px;color:#444;letter-spacing:-0.08px">56569.76 , 45475.82 , 1650.10</div><svg class="abs" style="left:0;top:655px" width="1132" height="21" viewBox="0 655 1132 21" fill="none" stroke="#3c3c3c" stroke-width="1.200" stroke-linejoin="round">
<!-- 1 -->
<path d="M6.500 661.500V671H18.500V661.500H14L13 659.700H10L9.500 661.500Z"/>
<!-- 2 -->
<path d="M31.300 660.500V670.500M34.900 660.500V670.500" stroke-width="1.500"/><path d="M28.500 661.700h9.200M28.500 669.300h9.200" stroke-width="1.100"/>
<path d="M27.300 662.500V659.800H29.500M36.700 659.800H38.900V662.500M27.300 668.500V671.200H29.500M36.700 671.200H38.900V668.500" stroke-width="1"/>
<!-- 3 -->
<path d="M53.500 669.500H47.800V660H59V665M47.800 662.300H59" stroke-width="1.100"/>
<path d="M57.300 666V672M54.300 669H60.300" stroke-width="1.300"/>
<path d="M66.500 658V673M133 658V673M261.500 658V673" stroke="#d2d2d2" stroke-width="1"/>
<!-- 4 zoom extents -->
<path d="M73.500 662.500V660H76.500M82.500 660H85.500V662.500M73.500 668.500V671H76.500M82.500 671H85.500V668.500" stroke-width="1.300"/>
<circle cx="79.500" cy="665.500" r="3.400" stroke-width="1.100"/><path d="M79.500 662.500v6M76.500 665.500h6" stroke-width="1.300"/>
<!-- 5 hand -->
<path d="M96.500 666.500L94.300 664.800Q93.300 665.700 94.300 667L97.300 670.700Q98 671.500 99 671.500H103Q105.300 671.500 105.300 668.500V662.700Q104.300 661.700 103.500 662.700V665M103.500 662.700V661Q102.500 660 101.500 661V665M101.500 661V660.300Q100.500 659.300 99.500 660.300V665M99.500 661Q98.500 660 97.500 661V667" stroke-width="1.050"/>
<!-- 6 orbit -->
<ellipse cx="120.400" cy="665.500" rx="6" ry="2.700" stroke-width="1.100"/>
<ellipse cx="120.400" cy="665.500" rx="2.700" ry="5.900" stroke-width="1.100"/>
<circle cx="120.400" cy="665.500" r=".9" fill="#333" stroke="none"/>
<path d="M122.300 669.800l1.800-.3-.6 1.700z" fill="#333" stroke="none"/>
<!-- cubes -->
<path d="M140.300 662.300L142.800 659.500H152.300V668.500L149.800 671.300H140.300ZM140.300 662.300H149.800V671.300M149.800 662.300L152.300 659.500" stroke-width="1"/>
<path d="M160.800 662.300L163.300 659.500H172.800V668.500L170.300 671.300H160.800ZM160.800 662.300H170.300V671.300M170.300 662.300L172.800 659.500" stroke-width="1"/>
<path d="M163.300 659.500V668.500H172.800M163.300 668.500L160.800 671.300" stroke-width=".9"/>
<rect x="179.500" y="658" width="15.500" height="15.500" fill="#a9d9c9" stroke="#4aa088" stroke-width="1"/>
<path d="M181.500 662.300H190.300V671.300H181.500Z" fill="#cfcfcf" stroke="#333" stroke-width="1.100"/>
<path d="M181.500 662.300L184 659.800H192.800L190.300 662.300Z" fill="#eee" stroke="#333" stroke-width="1"/>
<path d="M190.300 662.300L192.800 659.800V668.800L190.300 671.300Z" fill="#555" stroke="#333" stroke-width="1"/>
<path d="M201.300 662.300H210.800V671.300H201.300Z" fill="#c4c4c4" stroke="#666" stroke-width="1"/>
<path d="M201.300 662.300L203.800 659.500H213.500L210.800 662.300Z" fill="#dedede" stroke="#666" stroke-width="1"/>
<path d="M210.800 662.300L213.500 659.500V668.500L210.800 671.300Z" fill="#6a6a6a" stroke="#555" stroke-width="1"/>
<path d="M222 662.300H231.300V671.300H222Z" fill="#c0c0c0" stroke="none"/>
<path d="M222 662.300L224.500 659.500H234L231.300 662.300Z" fill="#e4e4e4" stroke="none"/>
<path d="M231.300 662.300L234 659.500V668.500L231.300 671.300Z" fill="#6e6e6e" stroke="none"/>
<path d="M245 665.500L248.500 662.300 252 665.500M245 669.500L248.500 666.300 252 669.500" stroke-width="1.100" stroke="#5a5a5a"/>
<!-- zoom slider -->
<text x="274.300" y="669.300" text-anchor="middle" font-family="'Liberation Sans',sans-serif" font-size="12" fill="#8a8a8a" stroke="none">−</text>
<path d="M284.500 665.500H332" stroke="#b4b4b4" stroke-width="1"/>
<rect x="306.800" y="660.500" width="3.200" height="10" rx="1" fill="#fff" stroke="#8a8a8a" stroke-width="1"/>
<text x="343.500" y="669.500" text-anchor="middle" font-family="'Liberation Sans',sans-serif" font-size="11.500" fill="#8a8a8a" stroke="none">+</text>
<!-- right icons -->
<g fill="#a9d9c9" stroke="#4aa088" stroke-width="1">
<rect x="979.500" y="658" width="15.500" height="15.500"/><rect x="1008" y="658" width="15.500" height="15.500"/><rect x="1028.500" y="658" width="15.500" height="15.500"/>
</g>
<path d="M983.300 662.500H993V672H983.300Z" stroke="#2e7e68" stroke-width="1.300"/>
<rect x="981" y="660" width="3.800" height="3.800" fill="#e8f5f0" stroke="#2e7e68" stroke-width="1"/>
<path d="M997 664h6.500l-3.250 3.500z" fill="#333" stroke="none"/>
<path d="M1010 671.500L1021.500 660M1010 671.500H1021.500" stroke="#2e6e5c" stroke-width="1.100"/>
<circle cx="1015.700" cy="665.700" r="1.300" fill="#a9d9c9" stroke="#2e6e5c" stroke-width="1"/>
<path d="M1030.500 660.500L1035 671.500H1042M1031.500 671.500H1035M1034 667.500Q1037.500 668 1038.500 671.500" stroke="#2e6e5c" stroke-width="1.100"/>
<path d="M1051 659V671.300H1062.500M1051 667.500H1054.800V671.300" stroke-width="1.200" stroke="#444"/>
<path d="M1071.300 659.500H1082.300V671H1071.300ZM1075 659.500V671M1078.700 659.500V671M1071.300 663.300H1082.300M1071.300 667.200H1082.300" stroke-width="1.100" stroke="#333"/>
<path d="M1097.500 659.500L1101.500 663.500 1097.500 667.500 1093.500 663.500Z M1097.500 668.500v2" stroke="#444" stroke-width="1.100"/>
<rect x="1096.300" y="662.300" width="2.400" height="2.600" stroke="#444" stroke-width=".9"/>
<path d="M1090.700 665.700l3-2v4zM1104.300 665.700l-3-2v4z" fill="#333" stroke="none"/>
<path d="M1096.300 669.800h2.400l-1.200 1.500z" fill="#333" stroke="none"/>
<g stroke="#444" stroke-width="1.100">
<circle cx="1117.300" cy="665.300" r="2.100"/>
<path d="M1116.200 659.300h2.200l.4 1.700 1.500.9 1.700-.5 1.100 1.900-1.300 1.200v1.700l1.300 1.200-1.100 1.900-1.700-.5-1.500.9-.4 1.700h-2.200l-.4-1.700-1.500-.9-1.700.5-1.100-1.900 1.300-1.200v-1.700l-1.300-1.200 1.100-1.900 1.700.5 1.500-.9z"/>
</g>
</svg>
<div class="dlg" style="left:321.5px;top:176px;width:217.5px;height:204px"><div class="hd"></div></div><div class="t l dl" style="left:331.8px;top:191.6px;font-size:9.600px;word-spacing:1.5px;letter-spacing:.35px">构件参数 (柱)</div><svg class="abs" style="left:520.3px;top:182.7px" width="6" height="6" viewBox="0 0 6 6"><path d="M.5.500l5 5M5.500.500l-5 5" stroke="#555" stroke-width="1"/></svg><div class="t l dl" style="left:344px;top:220.25px;">x轴偏移（<span style="font-family:'Liberation Mono',monospace;font-size:8.4px;letter-spacing:.8px;margin-left:.8px">mm</span>）</div><div class="inp" style="left:443px;top:213px;width:73px;height:19.5px">0</div><div class="t l dl" style="left:344px;top:249.55px;">y轴偏移（<span style="font-family:'Liberation Mono',monospace;font-size:8.4px;letter-spacing:.8px;margin-left:.8px">mm</span>）</div><div class="inp" style="left:443px;top:242.3px;width:73px;height:19.5px">0</div><div class="t l dl" style="left:344px;top:278.75px;">柱底偏移（<span style="font-family:'Liberation Mono',monospace;font-size:8.4px;letter-spacing:.8px;margin-left:.8px">mm</span>）</div><div class="inp" style="left:443px;top:271.5px;width:73px;height:19.5px">0</div><div class="t l dl" style="left:344px;top:309.05px;"><span style="letter-spacing:.6px">绕轴旋转（度）</span></div><div class="inp" style="left:443px;top:301.8px;width:73px;height:19.5px">0.00</div><div class="btn ok" style="left:364.3px;top:339px;width:58.5px;height:18px;line-height:13px">确定</div><div class="btn" style="left:445.8px;top:339px;width:58.7px;height:18px;line-height:15px">取消</div><div class="dlg" style="left:606.5px;top:174.5px;width:223px;height:175.3px"><div class="hd"></div></div><div class="t l dl" style="left:616.8px;top:190.1px;font-size:9.600px;word-spacing:1.5px;letter-spacing:.35px">构件参数 (梁)</div><svg class="abs" style="left:810.8px;top:181.2px" width="6" height="6" viewBox="0 0 6 6"><path d="M.5.500l5 5M5.500.500l-5 5" stroke="#555" stroke-width="1"/></svg><div class="t l dl" style="left:630px;top:220.25px;">梁顶偏移1（<span style="font-family:'Liberation Mono',monospace;font-size:8.4px;letter-spacing:.8px;margin-left:.8px">mm</span>）</div><div class="inp" style="left:731.2px;top:212.5px;width:74px;height:20.5px">0</div><div class="t l dl" style="left:630px;top:250.35px;">梁顶偏移2（<span style="font-family:'Liberation Mono',monospace;font-size:8.4px;letter-spacing:.8px;margin-left:.8px">mm</span>）</div><div class="inp" style="left:731.2px;top:242.6px;width:74px;height:20.5px">0</div><div class="t l dl" style="left:630px;top:280.45px;">基线偏移（<span style="font-family:'Liberation Mono',monospace;font-size:8.4px;letter-spacing:.8px;margin-left:.8px">mm</span>）</div><div class="inp" style="left:731.2px;top:272.7px;width:74px;height:20.5px">0</div><div class="btn ok" style="left:650.4px;top:308px;width:60.2px;height:18px;line-height:13px">确定</div><div class="btn" style="left:734px;top:308px;width:61px;height:18px;line-height:15px">取消</div><div class="call" style="left:23px;top:103.2px;width:133px;height:26.6px;padding:6.9px 0 0 11.5px">选择构件参数</div><div class="dot" style="left:4.8px;top:110.0px">1</div><div class="call" style="left:32px;top:489px;width:133px;height:26.6px;padding:6.9px 0 0 11.5px">勾选特定选项</div><div class="dot" style="left:14.100000000000001px;top:496.1px">2</div><div class="call" style="left:886px;top:207.3px;width:190px;height:26.7px;padding:7.0px 0 0 11.5px">输入数值方式更清晰</div><div class="dot" style="left:868.0px;top:214.8px">3</div><div class="abs" style="left:1078.500px;top:156.500px;width:26.500px;height:27.500px;background:#d6d6d6;border:1px solid #bdbdbd"></div><div class="t c " style="left:1091.7px;top:170.5px;font-family:'Liberation Serif','Noto Serif CJK SC',serif;font-size:19px;color:#666;font-weight:300">上</div></div></body></html>
